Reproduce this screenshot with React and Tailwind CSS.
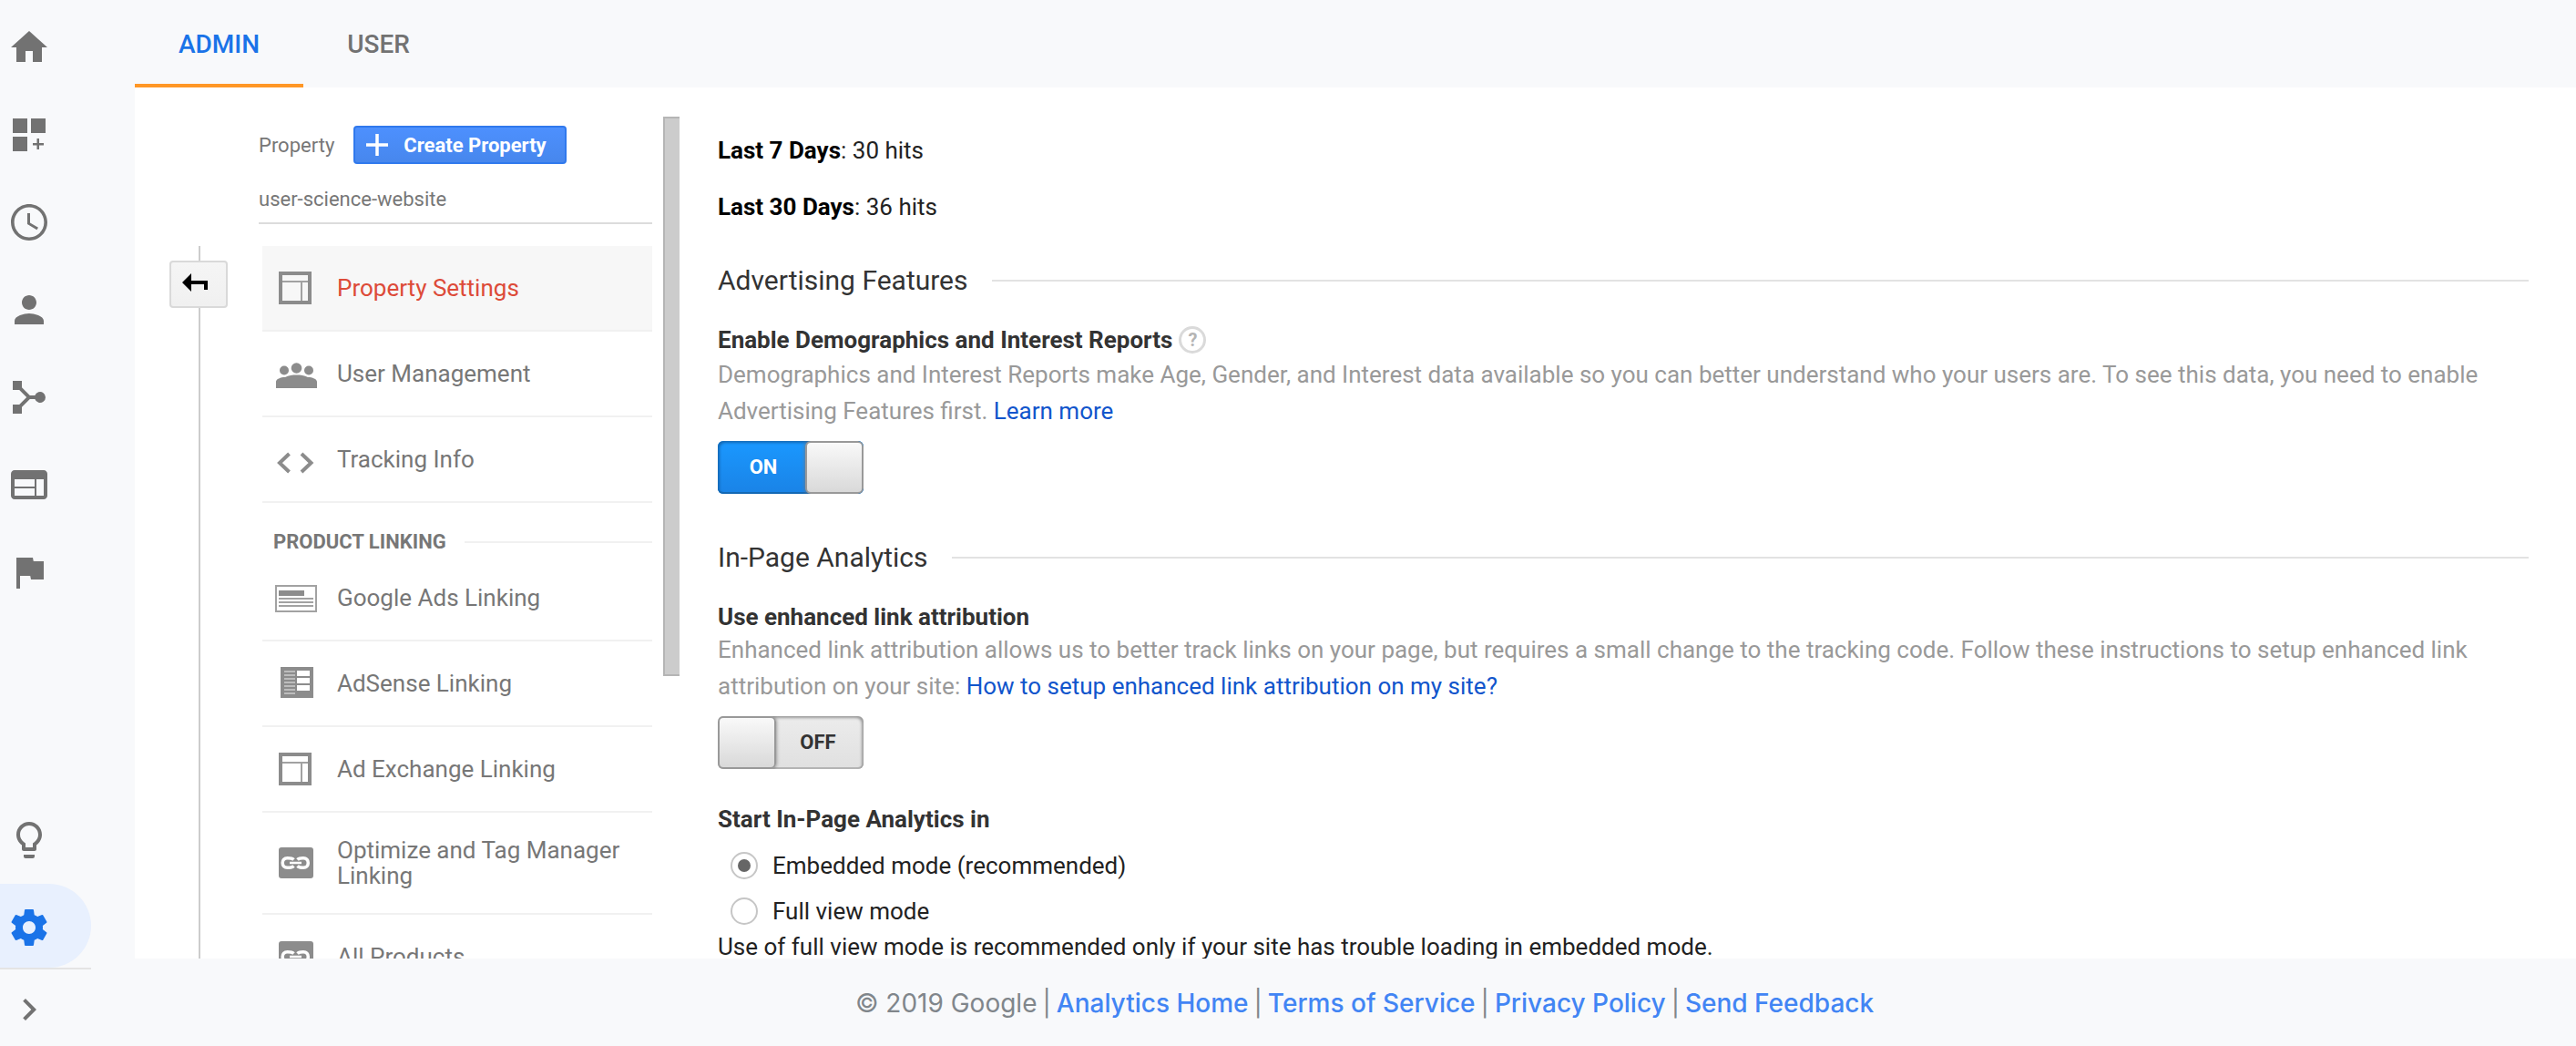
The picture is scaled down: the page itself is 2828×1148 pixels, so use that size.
import React, { useState } from "react";

function Mat({ d, className }) {
  return (
    <svg viewBox="0 0 24 24" className={"size-12 " + (className || "")} fill="currentColor" aria-hidden="true">
      <path d={d} />
    </svg>
  );
}

const RAIL_TOP = [
  ["Home", "M10 20v-6h4v6h5v-8h3L12 3 2 12h3v8z"],
  ["Customization", "M3 3h8v8H3zM13 3h8v8h-8zM3 13h8v8H3zM16.500 14h1v2.500H20v1.250h-2.500V20h-1.250v-2.250H14V16.500h2.250V14z"],
  ["Real-time", "M12 2C6.500 2 2 6.500 2 12s4.500 10 10 10 10-4.500 10-10S17.500 2 12 2zm0 18.200c-4.530 0-8.200-3.670-8.200-8.200S7.470 3.800 12 3.800s8.200 3.670 8.200 8.200-3.670 8.200-8.200 8.200zM12.500 7H11v6l5.200 3.100.8-1.200-4.500-2.700z"],
  ["Audience", "M12 12c2.210 0 4-1.790 4-4s-1.790-4-4-4-4 1.790-4 4 1.790 4 4 4zm0 2c-2.670 0-8 1.340-8 4v2h16v-2c0-2.660-5.330-4-8-4z"],
  ["Acquisition", "M3 3h5v3.600L12.400 11h2.770a3 3 0 1 1 0 2H12.400L8 17.400V21H3v-5h3.600l4-4-4-4H3z"],
  ["Behavior", "M20 4H4c-1.100 0-1.990.9-1.990 2L2 18c0 1.100.9 2 2 2h16c1.100 0 2-.9 2-2V6c0-1.100-.9-2-2-2zm-5 14H4v-4h11v4zm0-5H4V9h11v4zm5 5h-4V9h4v9z"],
  ["Conversions", "M14.400 6L14 4H5v17h2v-7h5.600l.4 2h7V6z"],
];

const BULB =
  "M9 21c0 .55.450 1 1 1h4c.550 0 1-.450 1-1v-1H9v1zm3-19C8.140 2 5 5.140 5 9c0 2.380 1.190 4.470 3 5.740V17c0 .550.450 1 1 1h6c.550 0 1-.450 1-1v-2.260c1.810-1.270 3-3.360 3-5.740 0-3.860-3.140-7-7-7zm2.850 11.100l-.850.600V16h-4v-2.300l-.850-.600C7.800 12.160 7 10.630 7 9c0-2.760 2.240-5 5-5s5 2.240 5 5c0 1.630-.800 3.160-2.150 4.100z";
const GEAR =
  "M19.430 12.980c.040-.320.070-.640.070-.980s-.030-.660-.070-.980l2.110-1.650c.190-.150.240-.420.120-.640l-2-3.460c-.120-.220-.390-.300-.610-.220l-2.490 1c-.520-.400-1.080-.730-1.690-.980l-.380-2.650C14.460 2.180 14.250 2 14 2h-4c-.250 0-.460.180-.490.420l-.380 2.650c-.610.250-1.170.590-1.690.980l-2.490-1c-.230-.090-.490 0-.610.220l-2 3.460c-.130.220-.070.490.120.640l2.110 1.650c-.040.320-.070.650-.070.980s.030.660.070.980l-2.110 1.650c-.190.150-.240.420-.120.640l2 3.460c.120.220.390.300.610.220l2.490-1c.520.400 1.080.730 1.690.980l.380 2.650c.030.240.240.420.490.420h4c.250 0 .460-.180.490-.420l.380-2.650c.610-.250 1.170-.590 1.690-.980l2.490 1c.230.090.490 0 .610-.220l2-3.460c.120-.220.070-.490-.120-.640l-2.110-1.650zM12 15.500c-1.930 0-3.500-1.570-3.500-3.500s1.570-3.500 3.500-3.500 3.500 1.570 3.500 3.500-1.570 3.500-3.500 3.500z";
const CHEVRON = "M8.590 16.590L13.170 12 8.590 7.410 10 6l6 6-6 6z";

function Rail() {
  return (
    <nav aria-label="Reports" className="flex w-37 shrink-0 flex-col pt-1 text-[#727272]">
      {RAIL_TOP.map(([label, d]) => (
        <a key={label} href="#" aria-label={label} className="flex h-24 w-25 items-center pl-2">
          <Mat d={d} />
        </a>
      ))}
      <div className="flex-1" />
      <a href="#" aria-label="Discover" className="flex h-24 w-25 items-center pl-2">
        <Mat d={BULB} />
      </a>
      <a href="#" aria-label="Admin" className="flex h-23 w-25 items-center rounded-r-full bg-[#e8f0fe] pt-1 pl-2 text-[#1a73e8]">
        <Mat d={GEAR} />
      </a>
      <button type="button" aria-label="Expand menu" className="flex h-[86px] w-25 items-center border-t-2 border-[#e4e4e4] pt-1 pl-2">
        <Mat d={CHEVRON} />
      </button>
    </nav>
  );
}

function LayoutIcon() {
  return (
    <svg viewBox="0 0 48 40" className="h-10 w-12" aria-hidden="true" fill="#8c8c8c">
      <path d="M6 2h36v36H6zM10 6v28h28V6z" fillRule="evenodd" />
      <path d="M10 12h28v2H10zM30 13h2v21h-2z" fill="#a2a2a2" />
    </svg>
  );
}

function PeopleIcon() {
  return (
    <svg viewBox="0 0 48 40" className="h-10 w-12" aria-hidden="true" fill="#8c8c8c">
      <circle cx="25.500" cy="14" r="5.800" />
      <circle cx="12" cy="16.500" r="5" />
      <circle cx="39" cy="16.500" r="5" />
      <path d="M3 36v-7c0-3 5-5 10-5 4-2 8-2.500 12.500-2.500s8.500.500 12.500 2.500c5 0 10 2 10 5v7z" />
    </svg>
  );
}

function CodeIcon() {
  return (
    <svg viewBox="0 0 48 40" className="h-10 w-12" aria-hidden="true" fill="none" stroke="#8c8c8c" strokeWidth="4">
      <path d="M17.500 14L7 24l10.500 10M31 14l10.500 10L31 34" />
    </svg>
  );
}

function AdsIcon() {
  return (
    <svg viewBox="0 0 48 40" className="h-10 w-12" aria-hidden="true" fill="#8c8c8c">
      <path d="M2 6h46v30H2zM4 8v26h42V8z" fillRule="evenodd" fill="#a2a2a2" />
      <path d="M6 12h28v6H6z" />
      <path d="M6 20h38v2H6zM6 24h38v2H6zM6 28h38v2H6z" fill="#a2a2a2" />
    </svg>
  );
}

function AdSenseIcon() {
  return (
    <svg viewBox="0 0 48 40" className="h-10 w-12" aria-hidden="true">
      <path d="M8 2h36v34H8z" fill="#8c8c8c" />
      <path d="M12 6h12v2H12zM12 10h12v2H12zM12 14h12v2H12zM12 18h12v2H12zM12 22h12v2H12zM12 26h12v2H12zM12 30h12v2H12z" fill="#bdbdbd" />
      <path d="M26 6h14v6H26zM26 14h14v6H26zM26 22h14v6H26z" fill="#fff" />
    </svg>
  );
}

function LinkIcon() {
  return (
    <svg viewBox="0 0 48 40" className="h-10 w-12" aria-hidden="true">
      <rect x="6" y="3" width="38" height="34" rx="3" fill="#8c8c8c" />
      <g fill="none" stroke="#fff" strokeWidth="3.500">
        <path d="M22.500 16.500C21 15 19 14.700 15.500 14.700c-3.500 0-5.300 2.300-5.300 5.300s1.800 5.300 5.300 5.300c3.500 0 5.500-.3 7-1.800M26.500 16.500c1.500-1.500 3.500-1.800 6.500-1.800 3.500 0 5.300 2.300 5.300 5.300s-1.800 5.300-5.300 5.300c-3 0-5-.3-6.500-1.800" />
        <path d="M18 20h13" strokeWidth="2.500" />
      </g>
    </svg>
  );
}

function NavItem({ icon, label, active }) {
  return (
    <a
      href="#"
      className={
        "flex min-h-[94px] items-center border-b-2 border-[#f1f1f1] py-[27px] pr-3 pl-3 text-[26px] leading-7 " +
        (active ? "bg-[#f7f7f7] text-[#dd4b39]" : "text-[#777777]")
      }
    >
      <span className="-my-2 mr-[22px] shrink-0">{icon}</span>
      {label}
    </a>
  );
}

function PropertyColumn() {
  return (
    <div className="flex w-[432px] shrink-0 flex-col">
      <div className="flex h-[74px] items-end gap-[21px]">
        <span className="pb-1.5 text-[22px] leading-7 text-[#777777]">Property</span>
        <button
          type="button"
          className="flex h-[42px] items-center gap-[17px] rounded-sm border-2 border-[#3079ed] bg-linear-to-b from-[#4d90fe] to-[#4787ed] pr-5 pl-3 text-[22px] font-bold text-white"
        >
          <svg viewBox="0 0 24 24" className="size-6" aria-hidden="true" fill="none" stroke="#fff" strokeWidth="3.500">
            <path d="M12 0v24M0 12h24" />
          </svg>
          Create Property
        </button>
      </div>
      <div className="mb-6 border-b-2 border-[#dcdcdc] pt-[25px] pb-[11px] text-[22px] leading-7 text-[#777777]">user-science-website</div>
      <nav aria-label="Property" className="ml-1 flex flex-col">
        <NavItem icon={<LayoutIcon />} label="Property Settings" active />
        <NavItem icon={<PeopleIcon />} label="User Management" />
        <NavItem icon={<CodeIcon />} label="Tracking Info" />
        <div className="flex h-[58px] items-center gap-5 pt-7 pl-3">
          <h3 className="text-[22px] leading-7 font-bold text-[#777777]">PRODUCT LINKING</h3>
          <div className="h-0.5 flex-1 bg-[#f1f1f1]" />
        </div>
        <NavItem icon={<AdsIcon />} label="Google Ads Linking" />
        <NavItem icon={<AdSenseIcon />} label="AdSense Linking" />
        <NavItem icon={<LayoutIcon />} label="Ad Exchange Linking" />
        <NavItem icon={<LinkIcon />} label="Optimize and Tag Manager Linking" />
        <NavItem icon={<LinkIcon />} label="All Products" />
      </nav>
    </div>
  );
}

function Toggle({ on, onChange, label }) {
  const knob = <span className="w-16 rounded-md border-2 border-[#999999] bg-linear-to-b from-[#f9f9f9] to-[#d9d9d9] shadow-[0_0_4px_#777777]" />;
  return (
    <button
      type="button"
      role="switch"
      aria-checked={on}
      aria-label={label}
      onClick={onChange}
      className={
        "flex h-[58px] w-40 overflow-hidden rounded-md text-[22px] font-bold " +
        (on
          ? "bg-linear-to-b from-[#1a98ff] to-[#1a83e6] text-white shadow-[inset_2px_2px_3px_#1468b4,inset_0_-2px_0_#1468b4]"
          : "bg-linear-to-b from-[#ececec] to-[#e0e0e0] text-[#333333] shadow-[inset_-2px_2px_3px_#999999,inset_0_-2px_0_#b5b5b5]")
      }
    >
      {!on && knob}
      <span className={"flex flex-1 items-center justify-center " + (on ? "pl-1" : "pr-1")}>{on ? "ON" : "OFF"}</span>
      {on && knob}
    </button>
  );
}

function SectionHeading({ children }) {
  return (
    <div className="flex h-10 items-center gap-[26px]">
      <h2 className="text-[30px] leading-10 text-[#333333]">{children}</h2>
      <div className="h-0.5 flex-1 bg-[#e2e2e2]" />
    </div>
  );
}

function Radio({ label, checked, onChange }) {
  return (
    <label className="flex h-[50px] items-center gap-4 pl-3.5">
      <input
        type="radio"
        name="start-mode"
        checked={checked}
        onChange={onChange}
        className="size-[30px] appearance-none rounded-full border-2 border-[#c6c6c6] bg-white bg-clip-content p-1.5 checked:bg-[#666666]"
      />
      {label}
    </label>
  );
}

function Settings() {
  const [demographics, setDemographics] = useState(true);
  const [linkAttribution, setLinkAttribution] = useState(false);
  const [mode, setMode] = useState("embedded");
  return (
    <main className="min-w-0 flex-1 pt-[49px] pr-13 pl-[42px] text-[26px] leading-10 text-[#222222]">
      <p>
        <b className="text-black">Last 7 Days</b>: 30 hits
      </p>
      <p className="mt-[22px]">
        <b className="text-black">Last 30 Days</b>: 36 hits
      </p>
      <div className="mt-[41px]">
        <SectionHeading>Advertising Features</SectionHeading>
      </div>
      <div className="mt-[27px] flex h-9 items-center gap-[7px]">
        <h3 className="font-bold text-[#333333]">Enable Demographics and Interest Reports</h3>
        <button
          type="button"
          aria-label="Help"
          className="flex size-[30px] items-center justify-center rounded-full border-[3px] border-[#dadada] text-[20px] leading-6 font-bold text-[#b4b4b4]"
        >
          ?
        </button>
      </div>
      <p className="text-[#999999]">
        Demographics and Interest Reports make Age, Gender, and Interest data available so you can better understand who your users are. To see this
        data, you need to enable Advertising Features first.{" "}
        <a href="#" className="text-[#1155cc]">
          Learn more
        </a>
      </p>
      <div className="mt-[13px]">
        <Toggle on={demographics} onChange={() => setDemographics(!demographics)} label="Enable Demographics and Interest Reports" />
      </div>
      <div className="mt-[50px]">
        <SectionHeading>In-Page Analytics</SectionHeading>
      </div>
      <h3 className="mt-[25px] h-9 font-bold text-[#333333]">Use enhanced link attribution</h3>
      <p className="text-[#999999]">
        Enhanced link attribution allows us to better track links on your page, but requires a small change to the tracking code. Follow these
        instructions to setup enhanced link attribution on your site:{" "}
        <a href="#" className="text-[#1155cc]">
          How to setup enhanced link attribution on my site?
        </a>
      </p>
      <div className="mt-[13px]">
        <Toggle on={linkAttribution} onChange={() => setLinkAttribution(!linkAttribution)} label="Use enhanced link attribution" />
      </div>
      <fieldset className="mt-[35px]">
        <legend className="mb-1.5 font-bold text-[#333333]">Start In-Page Analytics in</legend>
        <Radio label="Embedded mode (recommended)" checked={mode === "embedded"} onChange={() => setMode("embedded")} />
        <Radio label="Full view mode" checked={mode === "full"} onChange={() => setMode("full")} />
      </fieldset>
      <p className="-mt-1.5">Use of full view mode is recommended only if your site has trouble loading in embedded mode.</p>
    </main>
  );
}

const FOOTER_LINKS = ["Analytics Home", "Terms of Service", "Privacy Policy", "Send Feedback"];

export default function App() {
  return (
    <div className="flex h-screen w-full overflow-hidden bg-[#f8f9fb] font-[Roboto,sans-serif]">
      <Rail />
      <div className="flex min-w-0 flex-1 flex-col">
        <header className="flex h-24 shrink-0 text-[28px] font-medium">
          <a href="#" aria-current="page" className="flex items-center border-b-4 border-[#ff9726] px-12 pt-1.5 text-[#1a73e8]">
            ADMIN
          </a>
          <a href="#" className="flex items-center border-b-4 border-transparent px-12 pt-1.5 text-[#727272]">
            USER
          </a>
        </header>
        <div className="flex min-h-0 flex-1 items-stretch overflow-hidden bg-white">
          <div className="flex w-34 shrink-0 flex-col pt-[174px] pl-[38px]">
            <div className="ml-8 h-4 w-0.5 bg-[#cccccc]" />
            <button
              type="button"
              aria-label="Back"
              className="flex h-13 w-16 shrink-0 items-center rounded-sm border-2 border-[#d9d9d9] bg-linear-to-b from-[#f5f5f5] to-[#f0f0f0] pb-1 pl-3"
            >
              <svg viewBox="0 0 28 20" className="h-5 w-7" aria-hidden="true">
                <path d="M10 0v8h18v10h-4v-6H10v8L0 10z" fill="#000" />
              </svg>
            </button>
            <div className="ml-8 w-0.5 flex-1 bg-[#cccccc]" />
          </div>
          <div className="pt-2.5">
            <PropertyColumn />
          </div>
          <div className="ml-3 pt-8">
            <div className="h-[614px] w-[18px] border-y-2 border-l-2 border-[#b5b5b5] bg-[#cccccc]" />
          </div>
          <Settings />
        </div>
        <footer className="flex h-24 shrink-0 items-center justify-center gap-1.5 pt-0.5 pl-5 font-[Inter,sans-serif] text-[28px] text-[#80868b]">
          <span>© 2019 Google</span>
          {FOOTER_LINKS.map((label) => (
            <React.Fragment key={label}>
              <span>|</span>
              <a href="#" className="font-medium text-[#4285f4]">
                {label}
              </a>
            </React.Fragment>
          ))}
        </footer>
      </div>
    </div>
  );
}
